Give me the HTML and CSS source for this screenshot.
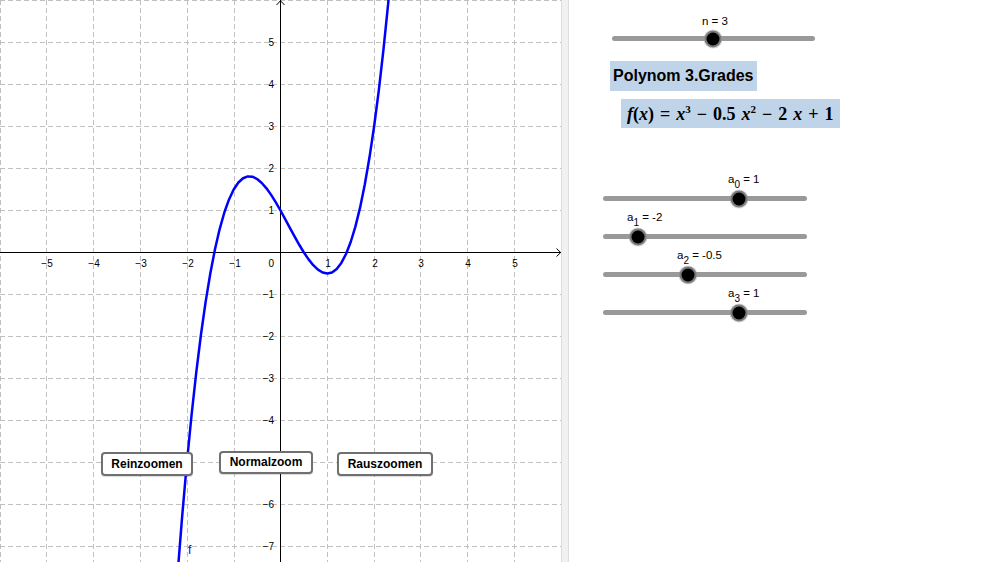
FILE: index.html
```html
<!DOCTYPE html>
<html lang="de">
<head>
<meta charset="utf-8">
<title>Polynom 3.Grades</title>
<link rel="stylesheet" href="styles.css">
</head>
<body>
<div class="app">
  <div class="graphics">
    <svg class="plot" width="561" height="562" viewBox="0 0 561 562" xmlns="http://www.w3.org/2000/svg">
      <g class="grid">
        <line x1="0.5" y1="0" x2="0.5" y2="562"/>
        <line x1="46.5" y1="0" x2="46.5" y2="562"/>
        <line x1="93.5" y1="0" x2="93.5" y2="562"/>
        <line x1="140.5" y1="0" x2="140.5" y2="562"/>
        <line x1="187.5" y1="0" x2="187.5" y2="562"/>
        <line x1="234.5" y1="0" x2="234.5" y2="562"/>
        <line x1="327.5" y1="0" x2="327.5" y2="562"/>
        <line x1="374.5" y1="0" x2="374.5" y2="562"/>
        <line x1="420.5" y1="0" x2="420.5" y2="562"/>
        <line x1="467.5" y1="0" x2="467.5" y2="562"/>
        <line x1="514.5" y1="0" x2="514.5" y2="562"/>
        <line x1="0" y1="0.5" x2="561" y2="0.5"/>
        <line x1="0" y1="42.5" x2="561" y2="42.5"/>
        <line x1="0" y1="84.5" x2="561" y2="84.5"/>
        <line x1="0" y1="126.5" x2="561" y2="126.5"/>
        <line x1="0" y1="168.5" x2="561" y2="168.5"/>
        <line x1="0" y1="210.5" x2="561" y2="210.5"/>
        <line x1="0" y1="294.5" x2="561" y2="294.5"/>
        <line x1="0" y1="336.5" x2="561" y2="336.5"/>
        <line x1="0" y1="378.5" x2="561" y2="378.5"/>
        <line x1="0" y1="420.5" x2="561" y2="420.5"/>
        <line x1="0" y1="462.5" x2="561" y2="462.5"/>
        <line x1="0" y1="504.5" x2="561" y2="504.5"/>
        <line x1="0" y1="546.5" x2="561" y2="546.5"/>
      </g>
      <g class="axes">
        <line x1="0" y1="252.5" x2="561" y2="252.5"/>
        <line x1="280.5" y1="0" x2="280.5" y2="562"/>
        <polyline points="276.5,5 280.5,0.8 284.5,5"/>
        <polyline points="556.5,248.5 560.7,252.5 556.5,256.5"/>
      </g>
      <g class="xlabels">
        <text x="47" y="267">−5</text>
        <text x="94" y="267">−4</text>
        <text x="141" y="267">−3</text>
        <text x="188" y="267">−2</text>
        <text x="235" y="267">−1</text>
        <text x="328" y="267">1</text>
        <text x="375" y="267">2</text>
        <text x="421" y="267">3</text>
        <text x="468" y="267">4</text>
        <text x="515" y="267">5</text>
      </g>
      <g class="ylabels">
        <text x="274" y="267">0</text>
        <text x="274" y="46">5</text>
        <text x="274" y="88">4</text>
        <text x="274" y="130">3</text>
        <text x="274" y="172">2</text>
        <text x="274" y="214">1</text>
        <text x="274" y="298">−1</text>
        <text x="274" y="340">−2</text>
        <text x="274" y="382">−3</text>
        <text x="274" y="424">−4</text>
        <text x="274" y="508">−6</text>
        <text x="274" y="550">−7</text>
      </g>
      <polyline class="curve" transform="translate(280.5 252.5) scale(46.8 -42)"
        points="-2.2,-7.668 -2.1,-6.266 -2,-5 -1.9,-3.864 -1.8,-2.852 -1.7,-1.958 -1.6,-1.176 -1.5,-0.5 -1.4,0.076 -1.3,0.558 -1.2,0.952 -1.1,1.264 -1,1.5 -0.9,1.666 -0.8,1.768 -0.7,1.812 -0.6,1.804 -0.5,1.75 -0.4,1.656 -0.3,1.528 -0.2,1.372 -0.1,1.194 0,1 0.1,0.796 0.2,0.588 0.3,0.382 0.4,0.184 0.5,0 0.6,-0.164 0.7,-0.302 0.8,-0.408 0.9,-0.476 1,-0.5 1.1,-0.474 1.2,-0.392 1.3,-0.248 1.4,-0.036 1.5,0.25 1.6,0.616 1.7,1.068 1.8,1.612 1.9,2.254 2,3 2.1,3.856 2.2,4.828 2.3,5.922 2.4,7.144"/>
      <text class="flabel" x="188" y="554">f</text>
    </svg>
    <button class="zoom-btn btn-in" type="button">Reinzoomen</button>
    <button class="zoom-btn btn-normal" type="button">Normalzoom</button>
    <button class="zoom-btn btn-out" type="button">Rauszoomen</button>
  </div>
  <div class="divider"></div>
  <div class="side">
    <div class="slider slider-n">
      <span class="slabel" style="left:90px">n = 3</span>
      <span class="knob" style="left:101px"></span>
    </div>
    <div class="title-box">Polynom 3.Grades</div>
    <div class="formula-box"><span class="mi">f</span>(<span class="mi">x</span>) = <span class="mi">x</span><sup>3</sup> − 0.5 <span class="mi">x</span><sup>2</sup> − 2 <span class="mi">x</span> + 1</div>
    <div class="slider slider-a first">
      <span class="slabel" style="left:125px">a<sub>0</sub> = 1</span>
      <span class="knob" style="left:136px"></span>
    </div>
    <div class="slider slider-a">
      <span class="slabel" style="left:24px">a<sub>1</sub> = -2</span>
      <span class="knob" style="left:35px"></span>
    </div>
    <div class="slider slider-a">
      <span class="slabel" style="left:74px">a<sub>2</sub> = -0.5</span>
      <span class="knob" style="left:85px"></span>
    </div>
    <div class="slider slider-a">
      <span class="slabel" style="left:125px">a<sub>3</sub> = 1</span>
      <span class="knob" style="left:136px"></span>
    </div>
  </div>
</div>
</body>
</html>
```

FILE: styles.css
```css
html, body {
  margin: 0;
  padding: 0;
  background: #ffffff;
}

body {
  font-family: "Liberation Sans", Arial, sans-serif;
  color: #000;
}

.app {
  display: flex;
  width: 985px;
  height: 562px;
  overflow: hidden;
}

.graphics {
  position: relative;
  width: 561px;
  height: 562px;
  flex: none;
  overflow: hidden;
}

.plot {
  display: block;
}

.grid line {
  stroke: #c0c0c0;
  stroke-width: 1;
  stroke-dasharray: 5 3;
}

.axes line,
.axes polyline {
  stroke: #000;
  stroke-width: 1;
  fill: none;
}

.xlabels text,
.ylabels text {
  font-family: "Liberation Sans", Arial, sans-serif;
  font-size: 10px;
  fill: #000;
}

.xlabels text {
  text-anchor: middle;
}

.ylabels text {
  text-anchor: end;
}

.curve {
  fill: none;
  stroke: #0000ff;
  stroke-width: 2.5;
  stroke-linejoin: round;
  stroke-linecap: round;
  vector-effect: non-scaling-stroke;
}

.flabel {
  font-family: "Liberation Sans", Arial, sans-serif;
  font-size: 12px;
  fill: #0000ff;
}

.zoom-btn {
  position: absolute;
  box-sizing: border-box;
  height: 24px;
  padding: 0;
  background: #ffffff;
  border: 2px solid #707070;
  border-radius: 4px;
  box-shadow: 0 1px 1px rgba(0, 0, 0, 0.15);
  font-family: "Liberation Sans", Arial, sans-serif;
  font-size: 12px;
  font-weight: bold;
  color: #000;
  line-height: 20px;
  text-align: center;
}

.btn-in {
  left: 101px;
  top: 452px;
  width: 92px;
}

.btn-normal {
  left: 219px;
  top: 451px;
  width: 94px;
  height: 23px;
  line-height: 19px;
}

.btn-out {
  left: 337px;
  top: 452px;
  width: 96px;
}

.divider {
  flex: none;
  width: 6px;
  background: #f1f1f1;
  border-left: 1px solid #dddddd;
  border-right: 1px solid #dddddd;
}

.side {
  flex: 1;
  display: flex;
  flex-direction: column;
  align-items: flex-start;
}

.slider {
  position: relative;
  height: 5px;
  background: #999999;
  border-radius: 3px;
}

.slider-n {
  width: 203px;
  margin-top: 36px;
  margin-left: 43px;
}

.slider-a {
  width: 204px;
  margin-left: 34px;
  margin-top: 33px;
}

.slider-a.first {
  margin-top: 68px;
}

.slabel {
  position: absolute;
  bottom: 14px;
  font-size: 11.5px;
  line-height: 12px;
  white-space: nowrap;
  color: #000;
}

.slider-a .slabel {
  bottom: 16px;
}

.slabel sub {
  font-size: 10px;
  vertical-align: -5px;
  line-height: 0;
}

.knob {
  position: absolute;
  top: 50%;
  width: 17px;
  height: 17px;
  box-sizing: border-box;
  border-radius: 50%;
  background: #000;
  border: 2.5px solid #7a7a7a;
  box-shadow: 0 0 0 1px rgba(160, 160, 160, 0.45);
  transform: translate(-50%, -50%);
}

.title-box {
  margin-top: 20px;
  margin-left: 41px;
  height: 30px;
  padding: 0 3px;
  background: #bfd4e9;
  font-size: 16px;
  font-weight: bold;
  line-height: 30px;
  white-space: nowrap;
}

.formula-box {
  margin-top: 8px;
  margin-left: 52px;
  height: 29px;
  padding: 0 6px;
  background: #bfd4e9;
  font-family: "Liberation Serif", "Times New Roman", serif;
  font-size: 18px;
  font-weight: bold;
  word-spacing: 1.5px;
  line-height: 30px;
  white-space: nowrap;
}

.formula-box .mi {
  font-style: italic;
}

.formula-box sup {
  font-size: 11px;
  line-height: 0;
  vertical-align: 7px;
}
```
